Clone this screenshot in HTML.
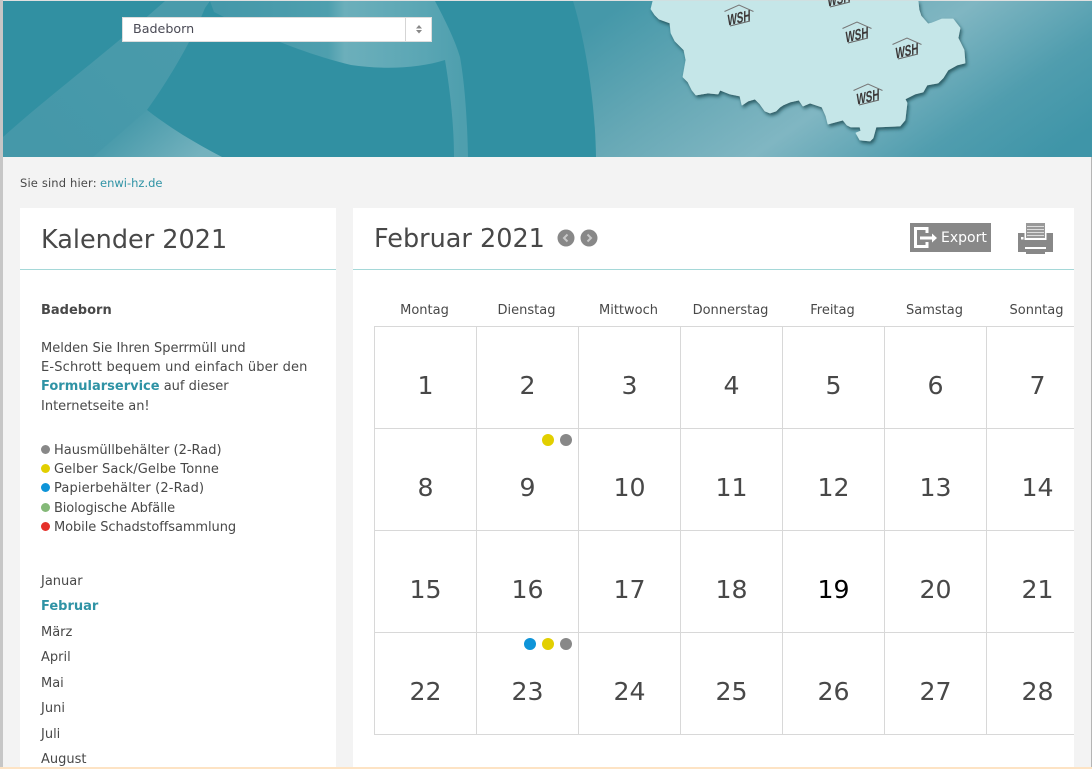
<!DOCTYPE html>
<html lang="de"><head><meta charset="utf-8"><title>Kalender 2021</title>
<style>
html,body{margin:0;padding:0;width:1092px;height:769px;overflow:hidden;background:#f3f3f3;font-family:"DejaVu Sans","Liberation Sans",sans-serif;color:#484848;font-size:13px}
.a{position:absolute;white-space:nowrap;line-height:18px}
.p{position:absolute;background:#fff}
.hl{position:absolute;height:1px;background:#a5d8d8}
.t{color:#2f93a5;font-weight:bold}
.dot{position:absolute;border-radius:50%}
.d{position:absolute;width:102px;text-align:center;font-size:25.2px;line-height:30px;color:#484848;margin-left:-.5px}
.w{position:absolute;width:102px;text-align:center;font-size:13px;line-height:18px;top:302px;margin-left:-.5px}
.gl{position:absolute;background:#d8d8d8}
</style></head><body>
<svg style="position:absolute;left:0;top:0" width="1092" height="157" viewBox="0 0 1092 157">
<defs>
<linearGradient id="r" x1="600" y1="20" x2="810" y2="323" gradientUnits="userSpaceOnUse">
<stop offset="0" stop-color="#4598a9"/><stop offset=".3" stop-color="#68a9b6"/><stop offset=".54" stop-color="#80b6c2"/><stop offset=".8" stop-color="#509dae"/><stop offset="1" stop-color="#3f95a8"/></linearGradient>
<linearGradient id="l" x1="60" y1="157" x2="190" y2="30" gradientUnits="userSpaceOnUse"><stop offset="0" stop-color="#4598a9"/><stop offset="1" stop-color="#4a9bab"/></linearGradient>
<linearGradient id="lb" x1="120" y1="133" x2="165" y2="185" gradientUnits="userSpaceOnUse"><stop offset="0" stop-color="#4a9bab"/><stop offset="1" stop-color="#74b2be"/></linearGradient>
<linearGradient id="rib" x1="220" y1="0" x2="460" y2="0" gradientUnits="userSpaceOnUse"><stop offset="0" stop-color="#4598a9"/><stop offset=".45" stop-color="#4e9fae"/><stop offset=".52" stop-color="#6cafbb"/><stop offset=".85" stop-color="#5aa6b4"/><stop offset="1" stop-color="#4f9fae"/></linearGradient>
<filter id="s" x="-5%" y="-5%" width="112%" height="115%"><feDropShadow dx="1.500" dy="2.500" stdDeviation="1.800" flood-color="#17464f" flood-opacity=".8"/></filter>
<g id="w" font-family="'Liberation Sans',sans-serif" font-weight="bold" font-size="15.500" fill="#3c3838"><path d="M-14.500 -3.500 L0 -10 L14.500 -3.500" fill="none" stroke="#777" stroke-width="1"/><path d="M-9 11 L11 6" stroke="#666" fill="none"/><text x="0" y="8" text-anchor="middle" textLength="23" lengthAdjust="spacingAndGlyphs" transform="skewY(-13)">WSH</text></g>
</defs>
<rect x="3" y="1" width="1089" height="156" fill="#3190a2"/>
<rect x="0" y="0" width="1092" height="1" fill="#e0e0e0"/>
<path d="M165 1 C110 50 50 95 3 137 V157 H222 C195 143 170 128 147 110 C165 85 190 45 205 8 L210 1 Z" fill="url(#l)"/>
<path d="M147 110 C170 128 195 143 222 157 H93 Z" fill="url(#lb)"/>
<path d="M210 1 L214 12 C240 25 290 50 351 65 C385 70 420 68 445 60 C450 90 454 125 454 157 H468 C467 110 464 80 460 57 C455 40 445 20 435 1 Z" fill="url(#rib)"/>
<path d="M573 1 C582 30 595 90 596 157 H1092 V1 Z" fill="url(#r)"/>
<path filter="url(#s)" fill="#c5e6e8" stroke="#c5e6e8" stroke-width=".8" stroke-linejoin="round" d="M653 1 L651 9 L655 15 L659 19 L670 23 L671 33 L675 41 L680 46 L684 50 L686 60 L683 77 L688 82 L692 90 L696 95 L708 93 L718 94 L720 90 L730 94 L740 96 L742 105 L748 101 L755 99 L760 104 L765 111 L770 113 L776 111 L780 107 L783 105 L790 102 L799 100 L803 106 L810 103 L822 107 L826 116 L828 124 L843 120 L847 125 L851 127 L860 127 L861 131 L856 133 L860 140 L870 141 L873 138 L876 127 L900 126 L905 120 L907 103 L905 99 L915 94 L923 92 L927 85 L938 83 L943 78 L948 70 L957 65 L965 63 L964 50 L958 38 L960 28 L953 19 L942 19 L932 23 L928 24 L921 16 L919 10 L918 1 Z"/>
<use href="#w" x="739" y="15"/><use href="#w" x="857" y="32"/><use href="#w" x="907" y="48"/><use href="#w" x="868" y="94"/><use href="#w" x="839" y="-4"/>
</svg>
<div style="position:absolute;left:0;top:0;width:3px;height:769px;background:#c6c6c6"></div>
<div style="position:absolute;left:1091px;top:157px;width:1px;height:612px;background:#b5b5b5"></div>

<div style="position:absolute;left:122px;top:17px;width:308px;height:23px;background:#fff;border:1px solid #ddd"></div>
<div class="a" style="left:133px;top:20px;color:#4a4a55;font-size:12.700px">Badeborn</div>
<div style="position:absolute;left:405px;top:18px;width:1px;height:23px;background:#d5d5d5"></div>
<svg style="position:absolute;left:414px;top:24px" width="10" height="11"><path d="M5 1 L8 4.500 H2 Z M5 9.500 L8 6 H2 Z" fill="#888"/></svg>

<div class="a" style="left:20px;top:174px;font-size:11.500px;letter-spacing:.15px">Sie sind hier:</div>
<div class="a" style="left:100px;top:174px;font-size:11.500px;color:#2f93a5">enwi-hz.de</div>

<div class="p" style="left:20px;top:208px;width:316px;height:561px"></div>
<div class="hl" style="left:20px;top:269px;width:316px"></div>
<div class="a" style="left:41px;top:224px;font-size:25.500px;line-height:32px">Kalender 2021</div>
<div class="a" style="left:41px;top:302px"><b>Badeborn</b></div>
<div class="a" style="left:41px;top:340px">Melden Sie Ihren Sperrmüll und</div>
<div class="a" style="left:41px;top:359px;letter-spacing:.16px">E-Schrott bequem und einfach über den</div>
<div class="a" style="left:41px;top:378px"><span class="t">Formularservice</span> auf dieser</div>
<div class="a" style="left:41px;top:398px">Internetseite an!</div>

<div class="dot" style="left:41px;top:445px;width:9px;height:9px;background:#888"></div><div class="a" style="left:54px;top:442px">Hausmüllbehälter (2-Rad)</div>
<div class="dot" style="left:41px;top:464px;width:9px;height:9px;background:#e2cf00"></div><div class="a" style="left:54px;top:461px;letter-spacing:.09px">Gelber Sack/Gelbe Tonne</div>
<div class="dot" style="left:41px;top:483px;width:9px;height:9px;background:#0e94d8"></div><div class="a" style="left:54px;top:480px;letter-spacing:.14px">Papierbehälter (2-Rad)</div>
<div class="dot" style="left:41px;top:503px;width:9px;height:9px;background:#84b978"></div><div class="a" style="left:54px;top:500px;letter-spacing:-.11px">Biologische Abfälle</div>
<div class="dot" style="left:41px;top:522px;width:9px;height:9px;background:#e5302a"></div><div class="a" style="left:54px;top:519px;letter-spacing:-.08px">Mobile Schadstoffsammlung</div>

<div class="a" style="left:41px;top:573px">Januar</div>
<div class="a t" style="left:41px;top:598px">Februar</div>
<div class="a" style="left:41px;top:624px">März</div>
<div class="a" style="left:41px;top:649px">April</div>
<div class="a" style="left:41px;top:675px">Mai</div>
<div class="a" style="left:41px;top:700px">Juni</div>
<div class="a" style="left:41px;top:726px">Juli</div>
<div class="a" style="left:41px;top:751px">August</div>

<div class="p" style="left:353px;top:208px;width:721px;height:561px"></div>
<div class="hl" style="left:353px;top:269px;width:721px"></div>
<div class="a" style="left:374px;top:223px;font-size:25.500px;line-height:32px">Februar 2021</div>
<svg style="position:absolute;left:556px;top:228px" width="44" height="20">
<circle cx="10" cy="10" r="8.500" fill="#888"/><circle cx="33" cy="10" r="8.500" fill="#888"/>
<path d="M11.500 6.500 L8 10 L11.500 13.500" fill="none" stroke="#c8c8c8" stroke-width="2"/><path d="M31.500 6.500 L35 10 L31.500 13.500" fill="none" stroke="#c8c8c8" stroke-width="2"/></svg>

<div style="position:absolute;left:910px;top:223px;width:81px;height:29px;background:#888"></div>
<svg style="position:absolute;left:910px;top:223px" width="32" height="29"><path d="M17 10 V5.500 H5.500 V23.500 H17 V19" fill="none" stroke="#fff" stroke-width="3"/><path d="M10 13.500 H22 V10.500 L27 15 L22 19.500 V16.500 H10 Z" fill="#fff"/></svg>
<div class="a" style="left:941px;top:229px;color:#fff;font-size:14px">Export</div>
<svg style="position:absolute;left:1018px;top:223px" width="36" height="32">
<rect x="0" y="10" width="35" height="19" fill="#888"/><rect x="6.500" y="0" width="22" height="17" fill="#fff"/><rect x="8" y="0" width="19" height="15" fill="#999"/>
<path d="M9 3.500H26M9 6.500H26M9 9.500H26M9 12.500H26" stroke="#ddd" stroke-width="1"/>
<rect x="3" y="14" width="2.500" height="2.500" fill="#fff"/><rect x="7" y="24" width="21" height="2" fill="#fff"/><rect x="8" y="26" width="19" height="5" fill="#888"/></svg>

<div class="w" style="left:374px">Montag</div><div class="w" style="left:476px">Dienstag</div><div class="w" style="left:578px">Mittwoch</div><div class="w" style="left:680px">Donnerstag</div><div class="w" style="left:782px">Freitag</div><div class="w" style="left:884px">Samstag</div><div class="w" style="left:986px">Sonntag</div>

<div class="gl" style="left:374px;top:326px;width:700px;height:1px"></div>
<div class="gl" style="left:374px;top:428px;width:700px;height:1px"></div>
<div class="gl" style="left:374px;top:530px;width:700px;height:1px"></div>
<div class="gl" style="left:374px;top:632px;width:700px;height:1px"></div>
<div class="gl" style="left:374px;top:734px;width:700px;height:1px"></div>
<div class="gl" style="left:374px;top:326px;width:1px;height:409px"></div>
<div class="gl" style="left:476px;top:326px;width:1px;height:409px"></div>
<div class="gl" style="left:578px;top:326px;width:1px;height:409px"></div>
<div class="gl" style="left:680px;top:326px;width:1px;height:409px"></div>
<div class="gl" style="left:782px;top:326px;width:1px;height:409px"></div>
<div class="gl" style="left:884px;top:326px;width:1px;height:409px"></div>
<div class="gl" style="left:986px;top:326px;width:1px;height:409px"></div>

<div class="d" style="left:375px;top:371px">1</div><div class="d" style="left:477px;top:371px">2</div><div class="d" style="left:579px;top:371px">3</div><div class="d" style="left:681px;top:371px">4</div><div class="d" style="left:783px;top:371px">5</div><div class="d" style="left:885px;top:371px">6</div><div class="d" style="left:987px;top:371px">7</div>
<div class="d" style="left:375px;top:473px">8</div><div class="d" style="left:477px;top:473px">9</div><div class="d" style="left:579px;top:473px">10</div><div class="d" style="left:681px;top:473px">11</div><div class="d" style="left:783px;top:473px">12</div><div class="d" style="left:885px;top:473px">13</div><div class="d" style="left:987px;top:473px">14</div>
<div class="d" style="left:375px;top:575px">15</div><div class="d" style="left:477px;top:575px">16</div><div class="d" style="left:579px;top:575px">17</div><div class="d" style="left:681px;top:575px">18</div><div class="d" style="left:783px;top:575px;color:#000">19</div><div class="d" style="left:885px;top:575px">20</div><div class="d" style="left:987px;top:575px">21</div>
<div class="d" style="left:375px;top:677px">22</div><div class="d" style="left:477px;top:677px">23</div><div class="d" style="left:579px;top:677px">24</div><div class="d" style="left:681px;top:677px">25</div><div class="d" style="left:783px;top:677px">26</div><div class="d" style="left:885px;top:677px">27</div><div class="d" style="left:987px;top:677px">28</div>

<div class="dot" style="left:542px;top:434px;width:12px;height:12px;background:#e2cf00"></div>
<div class="dot" style="left:560px;top:434px;width:12px;height:12px;background:#888"></div>
<div class="dot" style="left:524px;top:638px;width:12px;height:12px;background:#0e94d8"></div>
<div class="dot" style="left:542px;top:638px;width:12px;height:12px;background:#e2cf00"></div>
<div class="dot" style="left:560px;top:638px;width:12px;height:12px;background:#888"></div>

<div style="position:absolute;left:0;top:767px;width:1092px;height:2px;background:#fde3c4"></div>
</body></html>
